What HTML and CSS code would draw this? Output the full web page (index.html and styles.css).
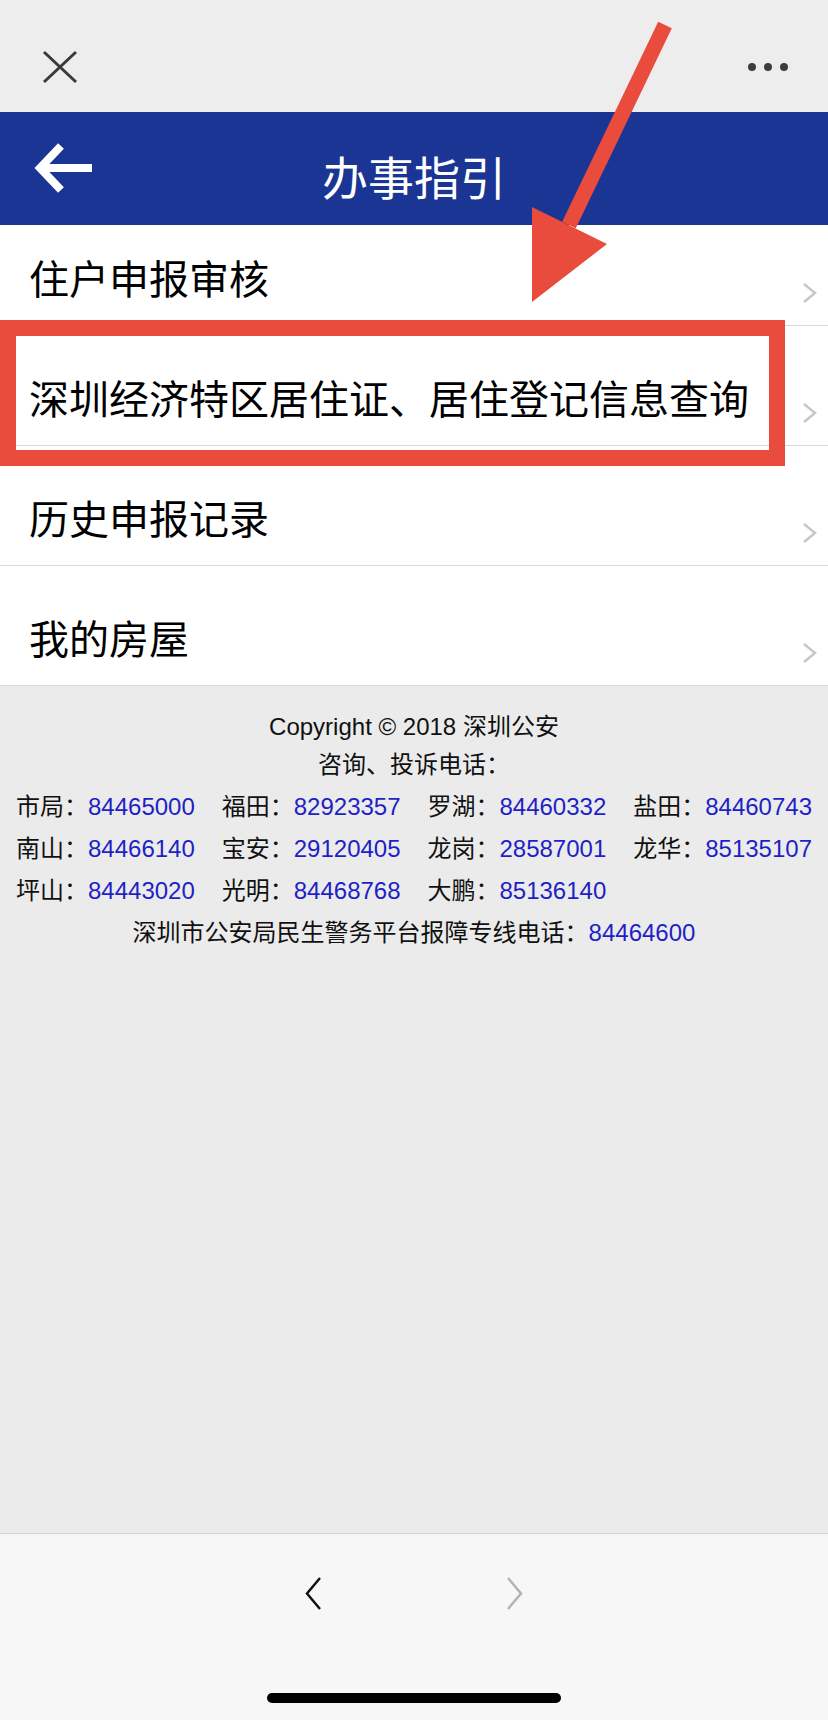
FILE: index.html
```html
<!DOCTYPE html>
<html lang="zh-CN">
<head>
    <meta charset="utf-8">
    <title>办事指引</title>
    <link rel="stylesheet" href="styles.css">
</head>
<body>
    <div class="page">
        <div class="topbar">
            <svg class="close" width="40" height="40" viewBox="40 47 40 40">
                <path d="M44 52 L76 82 M76 52 L44 82" stroke="#3a3a3a" stroke-width="3" fill="none"/>
            </svg>
            <svg class="more" width="46" height="40" viewBox="745 47 46 40">
                <circle cx="752" cy="67" r="4" fill="#3c3c3c"/>
                <circle cx="768" cy="67" r="4" fill="#3c3c3c"/>
                <circle cx="784" cy="67" r="4" fill="#3c3c3c"/>
            </svg>
        </div>

        <div class="header">
            <svg class="back" width="67" height="57" viewBox="30 140 67 57">
                <path d="M92 168 H42" stroke="#fff" stroke-width="8" fill="none"/>
                <polyline points="61,146 40,168 61,190" stroke="#fff" stroke-width="8" fill="none"/>
            </svg>
            <h1 class="title">办事指引</h1>
            <span></span>
        </div>

        <ul class="menu">
            <li class="item first">
                <span>住户申报审核</span>
                <svg class="chev" width="14" height="20" viewBox="0 0 14 20"><polyline points="1,1 12,10 1,19" stroke="#c7c7c7" stroke-width="2.5" fill="none"/></svg>
            </li>
            <li class="item">
                <span>深圳经济特区居住证、居住登记信息查询</span>
                <svg class="chev" width="14" height="20" viewBox="0 0 14 20"><polyline points="1,1 12,10 1,19" stroke="#c7c7c7" stroke-width="2.5" fill="none"/></svg>
            </li>
            <li class="item">
                <span>历史申报记录</span>
                <svg class="chev" width="14" height="20" viewBox="0 0 14 20"><polyline points="1,1 12,10 1,19" stroke="#c7c7c7" stroke-width="2.5" fill="none"/></svg>
            </li>
            <li class="item">
                <span>我的房屋</span>
                <svg class="chev" width="14" height="20" viewBox="0 0 14 20"><polyline points="1,1 12,10 1,19" stroke="#c7c7c7" stroke-width="2.5" fill="none"/></svg>
            </li>
        </ul>

        <div class="footer">
            <p class="line">Copyright © 2018 深圳公安</p>
            <p class="line">咨询、投诉电话：</p>
            <div class="phones">
                <div>市局：<span class="num">84465000</span></div>
                <div>福田：<span class="num">82923357</span></div>
                <div>罗湖：<span class="num">84460332</span></div>
                <div>盐田：<span class="num">84460743</span></div>
                <div>南山：<span class="num">84466140</span></div>
                <div>宝安：<span class="num">29120405</span></div>
                <div>龙岗：<span class="num">28587001</span></div>
                <div>龙华：<span class="num">85135107</span></div>
                <div>坪山：<span class="num">84443020</span></div>
                <div>光明：<span class="num">84468768</span></div>
                <div>大鹏：<span class="num">85136140</span></div>
            </div>
            <p class="hotline">深圳市公安局民生警务平台报障专线电话：<span class="num">84464600</span></p>
        </div>

        <div class="toolbar">
            <div class="nav">
                <svg width="16" height="33" viewBox="0 0 16 33"><polyline points="15,1 2,16.5 15,32" stroke="#111" stroke-width="2.5" fill="none"/></svg>
                <svg width="16" height="33" viewBox="0 0 16 33"><polyline points="1,1 14,16.5 1,32" stroke="#b3b3b3" stroke-width="2.5" fill="none"/></svg>
            </div>
            <div class="home"></div>
        </div>

        <!-- annotation drawn over the screenshot -->
        <div class="mark"></div>
        <svg class="pointer" width="828" height="320" viewBox="0 0 828 320">
            <polygon points="671.8,28.2 658.2,21.8 562.2,221.8 575.8,228.2" fill="#e94b3c"/>
            <polygon points="532,207 607,244 532,302" fill="#e94b3c"/>
        </svg>
    </div>
</body>
</html>
```

FILE: styles.css
```css
body {
    margin: 0;
    font-family: "Liberation Sans", "Noto Sans CJK SC", sans-serif;
    color: #000;
}

.page {
    position: relative;
    width: 828px;
    height: 1720px;
    display: flex;
    flex-direction: column;
    overflow: hidden;
}

.topbar {
    height: 112px;
    box-sizing: border-box;
    padding: 47px 37px 0 40px;
    display: flex;
    justify-content: space-between;
    align-items: flex-start;
    background-color: #ededed;
}

.topbar svg {
    display: block;
}

.header {
    height: 113px;
    display: grid;
    grid-template-columns: 1fr auto 1fr;
    align-items: center;
    background-color: #1b3594;
}

.back {
    display: block;
    margin-left: 30px;
}

.title {
    margin: 13px 0 0;
    font-family: "Noto Sans CJK SC", sans-serif;
    font-size: 46px;
    font-weight: 400;
    line-height: 60px;
    color: #fff;
}

.menu {
    list-style: none;
    margin: 0;
    padding: 0;
    background-color: #fff;
}

.item {
    display: flex;
    justify-content: space-between;
    align-items: flex-end;
    padding: 43px 11px 20px 29px;
    border-bottom: 1px solid #d9d9d9;
    font-family: "Noto Sans CJK SC", sans-serif;
    font-size: 40px;
    line-height: 56px;
}

.item.first {
    padding-top: 24px;
}

.chev {
    display: block;
    margin-bottom: 2px;
}

.footer {
    flex: 1;
    padding-top: 22px;
    background-color: #ebebeb;
    font-size: 24px;
    color: #111;
}

.line {
    margin: 0;
    line-height: 38px;
    text-align: center;
}

.phones {
    margin-top: 2px;
    padding: 0 16px;
    display: grid;
    grid-template-columns: repeat(4, max-content);
    justify-content: space-between;
    line-height: 42px;
}

.hotline {
    margin: 0;
    line-height: 42px;
    text-align: center;
}

.num {
    color: #1f1fc6;
}

.toolbar {
    height: 186px;
    border-top: 1px solid #d4d4d4;
    background-color: #f7f7f7;
    display: flex;
    flex-direction: column;
    align-items: center;
}

.nav {
    margin-top: 43px;
    display: flex;
    gap: 186px;
}

.nav svg {
    display: block;
}

.home {
    margin-top: 83px;
    width: 294px;
    height: 10px;
    border-radius: 5px;
    background-color: #000;
}

.mark {
    position: absolute;
    left: 0;
    top: 320px;
    width: 753px;
    height: 114px;
    border: 16px solid #e94b3c;
}

.pointer {
    position: absolute;
    left: 0;
    top: 0;
}
```
